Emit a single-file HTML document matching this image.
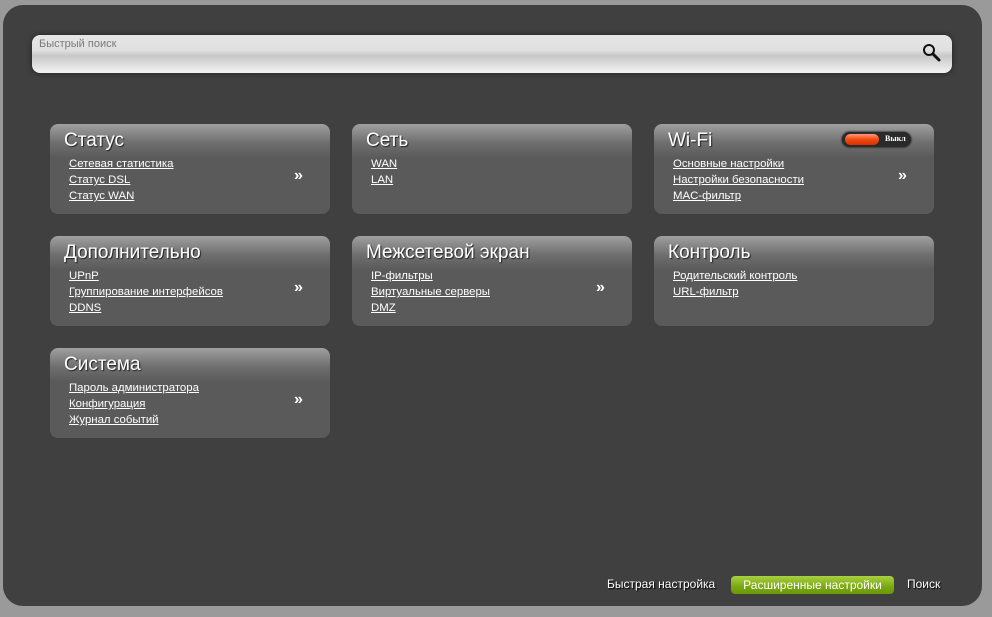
<!DOCTYPE html>
<html><head><meta charset="utf-8"><style>
body{margin:0;width:992px;height:617px;background:#9a9a9a;font-family:"Liberation Sans",sans-serif;position:relative;overflow:hidden}
.panel{position:absolute;left:3px;top:5px;width:979px;height:601px;background:#404040;border-radius:20px}
.search{position:absolute;left:32px;top:35px;width:920px;height:38px;border-radius:8px;background:linear-gradient(#e6e6e6 0,#e0e0e0 40%,#c8c8c8 55%,#f4f4f4 100%);box-shadow:0 0 6px rgba(0,0,0,.5)}
.search span{position:absolute;left:7px;top:3px;font-size:11px;color:#7a7a7a}
.card{position:absolute;width:280px;height:90px;border-radius:8px;background:linear-gradient(#a0a0a0 0,#707070 18px,#5a5a5a 34px,#5a5a5a 100%)}
.card h2{position:absolute;left:14px;top:6px;margin:0;font-size:19px;font-weight:normal;color:#fff;text-shadow:1px 1px 1px #222}
.card .l{position:absolute;left:19px;top:32px;font-size:11.4px;line-height:16px}
.card .l a{display:block;color:#fff;text-decoration:underline}
.card .c{position:absolute;left:244px;top:43px;color:#fff;font-size:16px;font-weight:bold}
.tog{position:absolute;left:188px;top:8px;width:69px;height:15px;border-radius:8px;background:#2a2a2a;box-shadow:0 0 2px #000}
.tog i{position:absolute;left:3px;top:2px;width:34px;height:11px;border-radius:6px;background:linear-gradient(#ff9a7a,#f04a10 50%,#d83000)}
.tog b{position:absolute;left:43px;top:2px;font-size:8px;color:#fff;font-family:"Liberation Serif",serif}
.f{position:absolute;top:577px;font-size:12px;color:#fff;text-shadow:1px 1px 1px #000}
.g{position:absolute;left:731px;top:576px;width:163px;height:18px;border-radius:4px;background:linear-gradient(#a8d040,#7aa810 60%,#6a9808);color:#fff;font-size:12px;text-align:center;line-height:18px}
</style></head><body>
<div class="panel"></div>
<div class="search"><span>Быстрый поиск</span>
<svg style="position:absolute;left:890px;top:8px" width="20" height="20" viewBox="0 0 20 20"><circle cx="7" cy="7" r="5" fill="none" stroke="#111" stroke-width="2"/><line x1="11" y1="11" x2="17" y2="17" stroke="#111" stroke-width="3" stroke-linecap="round"/></svg></div>

<div class="card" style="left:50px;top:124px"><h2>Статус</h2><div class="l"><a>Сетевая статистика</a><a>Статус DSL</a><a>Статус WAN</a></div><div class="c">»</div></div>
<div class="card" style="left:352px;top:124px"><h2>Сеть</h2><div class="l"><a>WAN</a><a>LAN</a></div></div>
<div class="card" style="left:654px;top:124px"><h2>Wi-Fi</h2><div class="tog"><i></i><b>Выкл</b></div><div class="l"><a>Основные настройки</a><a>Настройки безопасности</a><a>MAC-фильтр</a></div><div class="c">»</div></div>
<div class="card" style="left:50px;top:236px"><h2>Дополнительно</h2><div class="l"><a>UPnP</a><a>Группирование интерфейсов</a><a>DDNS</a></div><div class="c">»</div></div>
<div class="card" style="left:352px;top:236px"><h2>Межсетевой экран</h2><div class="l"><a>IP-фильтры</a><a>Виртуальные серверы</a><a>DMZ</a></div><div class="c">»</div></div>
<div class="card" style="left:654px;top:236px"><h2>Контроль</h2><div class="l"><a>Родительский контроль</a><a>URL-фильтр</a></div></div>
<div class="card" style="left:50px;top:348px"><h2>Система</h2><div class="l"><a>Пароль администратора</a><a>Конфигурация</a><a>Журнал событий</a></div><div class="c">»</div></div>

<div class="f" style="left:607px">Быстрая настройка</div>
<div class="g">Расширенные настройки</div>
<div class="f" style="left:907px">Поиск</div>
</body></html>
